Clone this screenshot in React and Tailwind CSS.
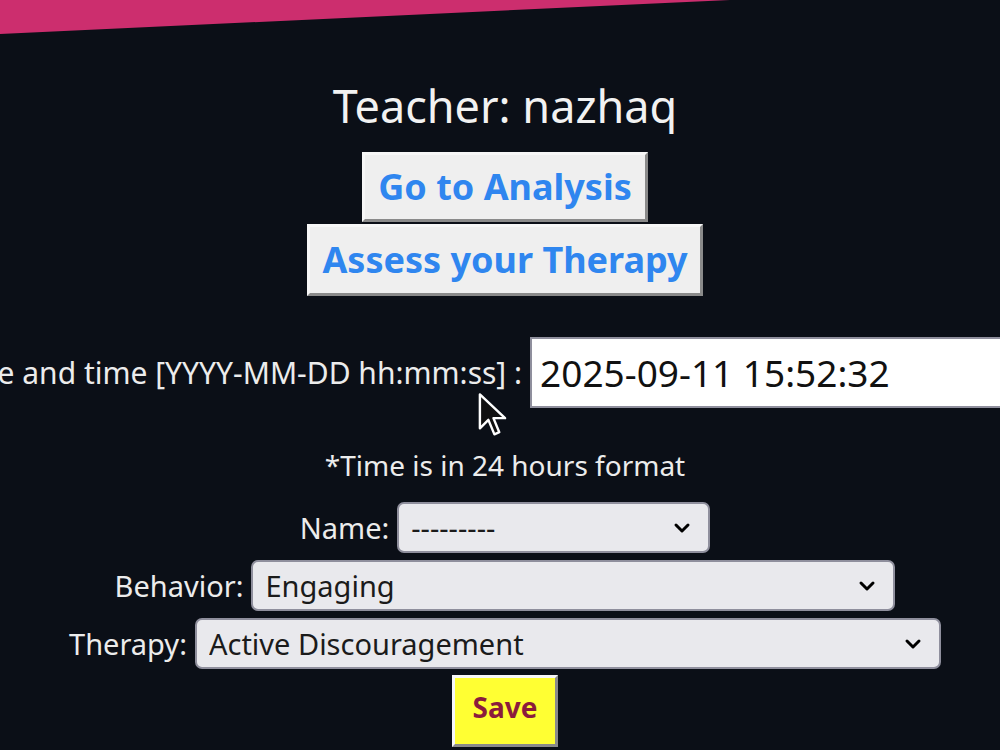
import { ChevronDown } from "lucide-react";

function Field({ label, value, widthClass }) {
  return (
    <div className="flex items-center justify-center gap-2">
      <span className="text-[29px] text-[#ececec]">{label}</span>
      <div className={`relative ${widthClass}`}>
        <select
          defaultValue={value}
          className="appearance-none w-full h-[51px] rounded-[7px] border-2 border-[#8f8f9d] bg-[#e9e9ed] pl-3 text-[29px] text-[#1b1b1b] outline-none"
        >
          <option>{value}</option>
        </select>
        <ChevronDown className="absolute right-4 top-1/2 -translate-y-1/2 w-6 h-6 text-black pointer-events-none" strokeWidth={3} />
      </div>
    </div>
  );
}

function Cursor() {
  return (
    <svg className="absolute left-[477px] top-[392px] w-[30px] h-[46px]" viewBox="0 0 12 19">
      <path d="M1 1 L1 15 L4.5 11.5 L7 17.5 L9 16.6 L6.6 10.8 L11.4 10.8 Z" fill="#111" stroke="#fff" strokeWidth="1" strokeLinejoin="round" />
    </svg>
  );
}

const bevel = "border-[3px] border-t-[#f7f7f7] border-l-[#f7f7f7] border-b-[#8a8a8a] border-r-[#8a8a8a]";

export default function App() {
  return (
    <div className="relative w-[1000px] h-[750px] overflow-hidden bg-[#0b0f17] font-['Noto_Sans','DejaVu_Sans',sans-serif]">
      {/* slanted header band */}
      <div className="absolute left-0 top-0 w-[730px] h-[34px] bg-[#cc2e6e] [clip-path:polygon(0_0,100%_0,0_100%)]"></div>

      <div className="flex flex-col items-center pl-[10px] pt-[80px]">
        <h1 className="h-[52px] leading-[52px] text-[45px] text-[#f2f2f2]">Teacher: nazhaq</h1>

        <div className="mt-[20px] flex flex-col items-center gap-[2px]">
          <button className={`h-[70px] px-[13px] bg-[#efefef] ${bevel} text-[36px] font-bold text-[#2f86ef]`}>
            Go to Analysis
          </button>
          <button className={`h-[72px] px-[12px] bg-[#efefef] ${bevel} text-[36px] font-bold text-[#2f86ef]`}>
            Assess your Therapy
          </button>
        </div>

        {/* this row is wider than the window and runs off both sides */}
        <div className="mt-[41px] self-stretch -ml-[62px] flex items-center gap-2">
          <span className="shrink-0 whitespace-nowrap text-[30px] text-[#ececec]">
            Date and time [YYYY-MM-DD hh:mm:ss] :
          </span>
          <input
            defaultValue="2025-09-11 15:52:32"
            className="shrink-0 w-[500px] h-[71px] px-2 bg-white border-2 border-[#8f8f9d] text-[37px] text-[#111] outline-none"
          />
        </div>

        <p className="mt-[40px] h-[34px] leading-[34px] text-[28px] text-[#ececec]">*Time is in 24 hours format</p>

        <div className="mt-[20px] flex flex-col items-center gap-[7px]">
          <Field label="Name:" value="---------" widthClass="w-[313px]" />
          <Field label="Behavior:" value="Engaging" widthClass="w-[644px]" />
          <Field label="Therapy:" value="Active Discouragement" widthClass="w-[746px]" />
        </div>

        <button className={`mt-[6px] h-[72px] w-[106px] pb-2 bg-[#ffff33] ${bevel} text-[28px] font-bold text-[#8b1c3c]`}>
          Save
        </button>
      </div>

      <Cursor />
    </div>
  );
}
